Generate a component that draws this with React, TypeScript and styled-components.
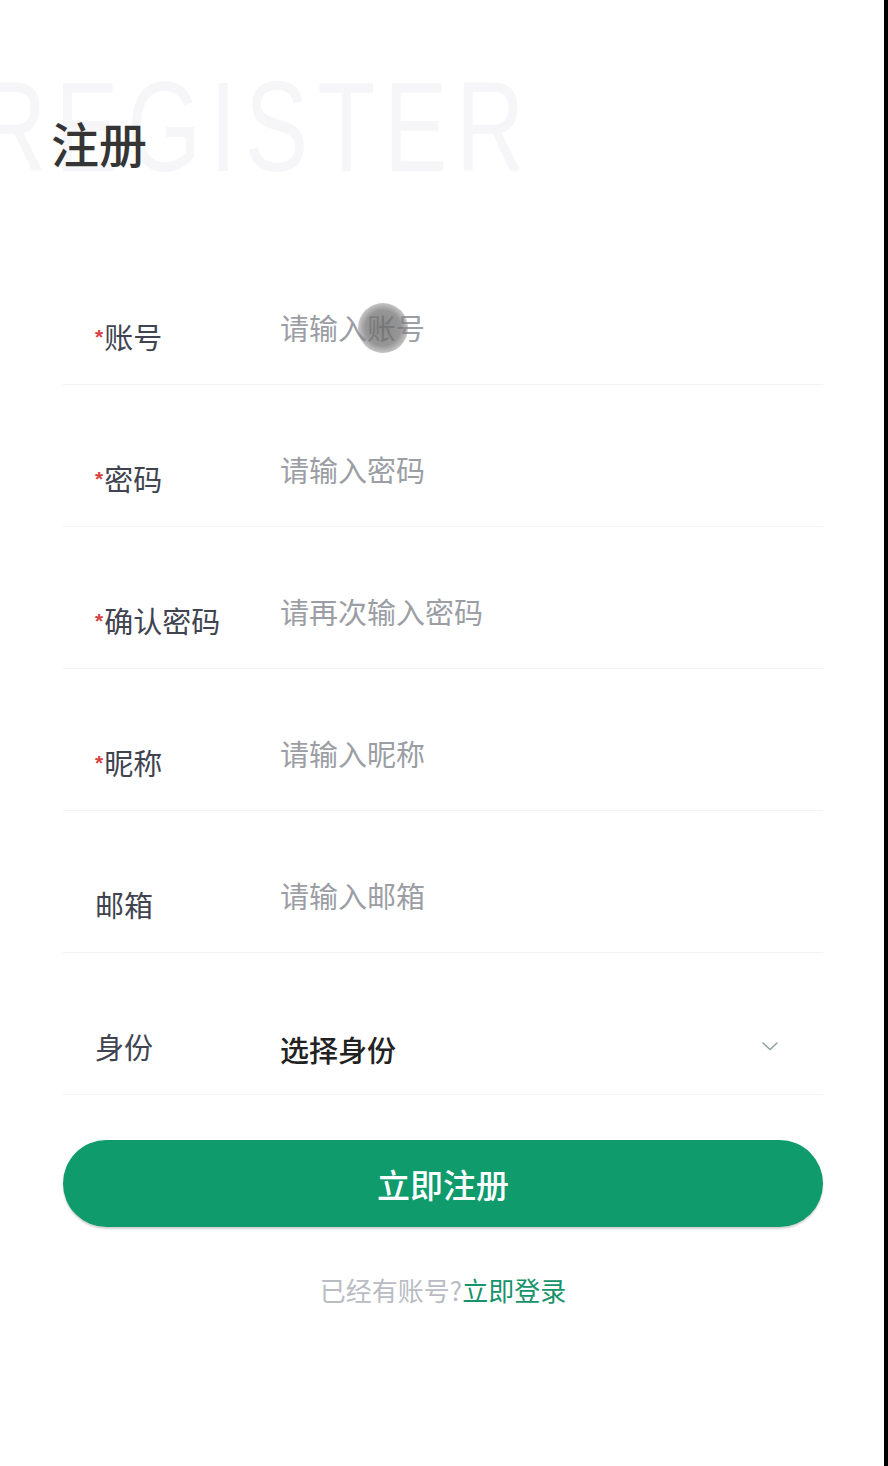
import React from "react";
import styled, { createGlobalStyle } from "styled-components";

const GlobalStyle = createGlobalStyle`
  body {
    margin: 0;
    background: #ffffff;
    font-family: "Noto Sans CJK SC", "Noto Sans", sans-serif;
  }
  * {
    box-sizing: border-box;
  }
`;

type Field = {
  label: string;
  placeholder: string;
  required: boolean;
};

const fields: Field[] = [
  { label: "账号", placeholder: "请输入账号", required: true },
  { label: "密码", placeholder: "请输入密码", required: true },
  { label: "确认密码", placeholder: "请再次输入密码", required: true },
  { label: "昵称", placeholder: "请输入昵称", required: true },
  { label: "邮箱", placeholder: "请输入邮箱", required: false },
];

const Page = styled.div`
  position: relative;
  width: 888px;
  min-height: 1466px;
  overflow: hidden;
  background: #ffffff;
  border-right: 4px solid #000000;
`;

const Header = styled.header`
  position: relative;
  height: 243px;
  padding: 117px 0 0 51px;
`;

const Watermark = styled.div`
  position: absolute;
  left: -22px;
  top: 63px;
  font-family: "Liberation Sans", Arial, sans-serif;
  font-size: 128px;
  line-height: 128px;
  letter-spacing: 12px;
  color: #f6f6f8;
  white-space: nowrap;
  transform: scaleX(0.74);
  transform-origin: left top;
  user-select: none;
`;

const Title = styled.h1`
  position: relative;
  margin: 0;
  font-size: 48px;
  line-height: 50px;
  font-weight: 500;
  color: #353535;
`;

const Form = styled.form`
  padding: 0 61px 0 63px;
`;

const Row = styled.div`
  position: relative;
  display: flex;
  align-items: flex-end;
  height: 142px;
  padding-left: 32px;
  border-bottom: 1px solid #f3f3f3;
`;

const Label = styled.label`
  width: 185px;
  flex-shrink: 0;
  margin-bottom: 33px;
  font-size: 29px;
  line-height: 30px;
  color: #3f4450;
`;

const Star = styled.span`
  display: inline-block;
  margin-right: 1px;
  font-family: "Liberation Sans", Arial, sans-serif;
  font-size: 21px;
  font-weight: 700;
  line-height: 17px;
  vertical-align: 5px;
  color: #d8403f;
`;

const Input = styled.input`
  flex: 1;
  height: 30px;
  margin: 0 0 42px;
  padding: 0;
  border: none;
  outline: none;
  background: transparent;
  font-family: "Noto Sans CJK SC", "Noto Sans", sans-serif;
  font-size: 29px;
  line-height: 30px;
  color: #333333;
  &::placeholder {
    color: #9b9ea4;
  }
`;

const SelectValue = styled.div`
  flex: 1;
  margin-bottom: 30px;
  font-size: 29px;
  line-height: 30px;
  font-weight: 500;
  color: #222222;
`;

const Chevron = styled.svg`
  margin: 0 44px 42px 0;
  flex-shrink: 0;
`;

const Cursor = styled.div`
  position: absolute;
  left: 295px;
  top: 60px;
  width: 50px;
  height: 50px;
  border-radius: 50%;
  background: radial-gradient(
    circle,
    rgba(105, 105, 105, 0.78) 0%,
    rgba(115, 115, 115, 0.75) 50%,
    rgba(150, 150, 150, 0.45) 75%,
    rgba(200, 200, 200, 0) 100%
  );
  pointer-events: none;
`;

const SubmitButton = styled.button`
  display: block;
  width: 100%;
  height: 87px;
  margin-top: 45px;
  border: none;
  border-radius: 44px;
  background: #0f9b6c;
  box-shadow: 0 2px 2px rgba(0, 0, 0, 0.18);
  font-family: "Noto Sans CJK SC", "Noto Sans", sans-serif;
  font-size: 33px;
  font-weight: 500;
  color: #ffffff;
  cursor: pointer;
`;

const Footer = styled.p`
  margin: 48px 0 0;
  text-align: center;
  font-size: 26px;
  line-height: 30px;
  color: #b9bcc2;
`;

const LoginLink = styled.a`
  color: #17936a;
  text-decoration: none;
  cursor: pointer;
`;

const App: React.FC = () => {
  return (
    <Page>
      <GlobalStyle />
      <Header>
        <Watermark>REGISTER</Watermark>
        <Title>注册</Title>
      </Header>
      <Form onSubmit={(e) => e.preventDefault()}>
        {fields.map((field, index) => (
          <Row key={field.label}>
            <Label>
              {field.required && <Star>*</Star>}
              {field.label}
            </Label>
            <Input placeholder={field.placeholder} />
            {index === 0 && <Cursor />}
          </Row>
        ))}
        <Row>
          <Label>身份</Label>
          <SelectValue>选择身份</SelectValue>
          <Chevron width="18" height="12" viewBox="0 0 18 12">
            <path
              d="M2 3 L9 9.5 L16 3"
              fill="none"
              stroke="#8fa3a0"
              strokeWidth="1.6"
              strokeLinecap="round"
              strokeLinejoin="round"
            />
          </Chevron>
        </Row>
        <SubmitButton type="submit">立即注册</SubmitButton>
        <Footer>
          已经有账号?<LoginLink>立即登录</LoginLink>
        </Footer>
      </Form>
    </Page>
  );
};

export default App;
